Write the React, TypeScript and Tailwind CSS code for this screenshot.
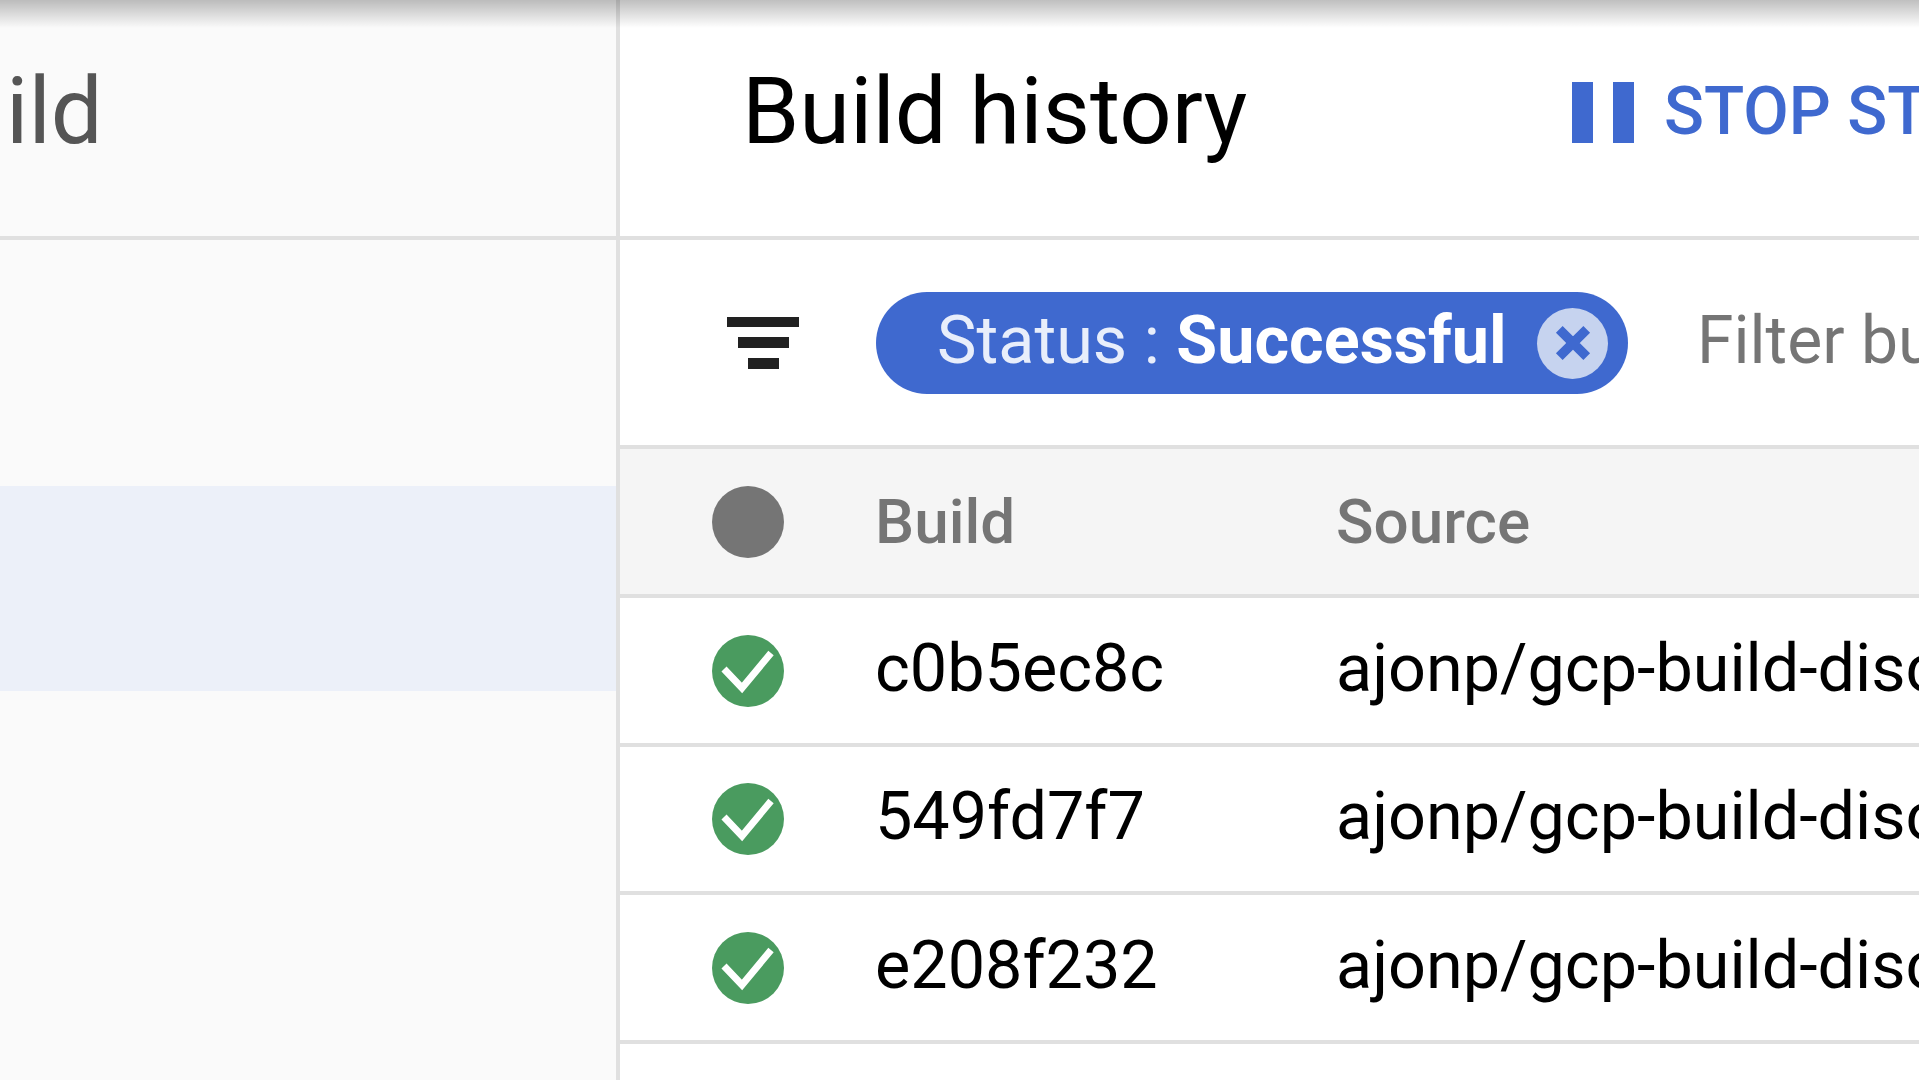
const builds = ['c0b5ec8c', '549fd7f7', 'e208f232'];

function SuccessIcon() {
  return (
    <svg viewBox="0 0 72 72" className="w-[72px] h-[72px] shrink-0 mt-[1px]">
      <circle cx="36" cy="36" r="36" fill="#4a9b5f" />
      <path d="M12 34 L30 53 L59 18" fill="none" stroke="#ffffff" strokeWidth="7" />
    </svg>
  );
}

function FilterIcon() {
  return (
    <div className="flex flex-col items-center gap-[10px] w-[72px]">
      <div className="w-[72px] h-[10px] bg-[#212121]" />
      <div className="w-[51px] h-[11px] bg-[#212121]" />
      <div className="w-[31px] h-[11px] bg-[#212121]" />
    </div>
  );
}

function Row({ id }: { id: string }) {
  return (
    <div className="h-[148.5px] shrink-0 flex items-center pl-[92px] border-b-[4px] border-[#e0e0e0] text-[66.5px] text-black whitespace-nowrap">
      <SuccessIcon />
      <span className="w-[461px] ml-[91px] shrink-0 mt-[-3px]">{id}</span>
      <span className="mt-[-3px]">ajonp/gcp-build-discord</span>
    </div>
  );
}

export default function App() {
  return (
    <div className="relative w-[1919px] h-[1080px] overflow-hidden flex bg-white font-['Roboto',sans-serif]">
      <div className="w-[620px] shrink-0 bg-[#fafafa] border-r-[4px] border-[#e0e0e0] flex flex-col">
        <div className="h-[240px] shrink-0 border-b-[4px] border-[#e0e0e0] flex items-center">
          <span className="text-[92px] text-[#555555] ml-[-102px] mt-[-12px] whitespace-nowrap">Build</span>
        </div>
        <div className="h-[246px] shrink-0" />
        <div className="h-[205px] shrink-0 bg-[#ecf0f9]" />
      </div>

      <div className="flex-1 min-w-0 flex flex-col overflow-hidden">
        <div className="h-[240px] shrink-0 border-b-[4px] border-[#e0e0e0] flex items-center whitespace-nowrap">
          <span className="text-[92px] text-black ml-[122px] mt-[-12px] w-[830px] shrink-0">Build history</span>
          <div className="flex items-center gap-[20px] mt-[-12px] shrink-0">
            <div className="w-[21px] h-[61px] bg-[#3f69cf]" />
            <div className="w-[21px] h-[61px] bg-[#3f69cf]" />
            <span className="text-[66px] font-medium text-[#3f69cf] ml-[10px] mt-[-2px]">STOP STREAMING</span>
          </div>
        </div>

        <div className="h-[209px] shrink-0 border-b-[4px] border-[#e0e0e0] flex items-center pl-[107px] whitespace-nowrap">
          <FilterIcon />
          <div className="ml-[77px] mt-[1px] h-[102px] w-[752px] shrink-0 rounded-full bg-[#3f69cf] flex items-center pl-[61px] text-[66.5px] text-[#e8eefb]">
            <span className="mt-[-5px]">Status : <span className="font-bold text-white">Successful</span></span>
            <div className="ml-auto mr-[20px] w-[71px] h-[71px] rounded-full bg-[#c6d3ef] flex items-center justify-center">
              <svg viewBox="0 0 36 36" className="w-[38px] h-[38px]">
                <path d="M5 5 L31 31 M31 5 L5 31" stroke="#3f69cf" strokeWidth="9" />
              </svg>
            </div>
          </div>
          <span className="ml-[69px] text-[66px] text-[#757575] mt-[-4px]">Filter builds</span>
        </div>

        <div className="h-[149px] shrink-0 bg-[#f5f5f5] border-b-[4px] border-[#e0e0e0] flex items-center pl-[92px] text-[62px] font-medium text-[#757575] whitespace-nowrap">
          <div className="w-[72px] h-[72px] rounded-full bg-[#757575] shrink-0" />
          <span className="w-[461px] ml-[91px] shrink-0">Build</span>
          <span>Source</span>
        </div>

        {builds.map((id) => (
          <Row key={id} id={id} />
        ))}
      </div>

      <div className="absolute top-0 left-0 right-0 h-[28px] pointer-events-none bg-gradient-to-b from-black/25 to-transparent" />
    </div>
  );
}
